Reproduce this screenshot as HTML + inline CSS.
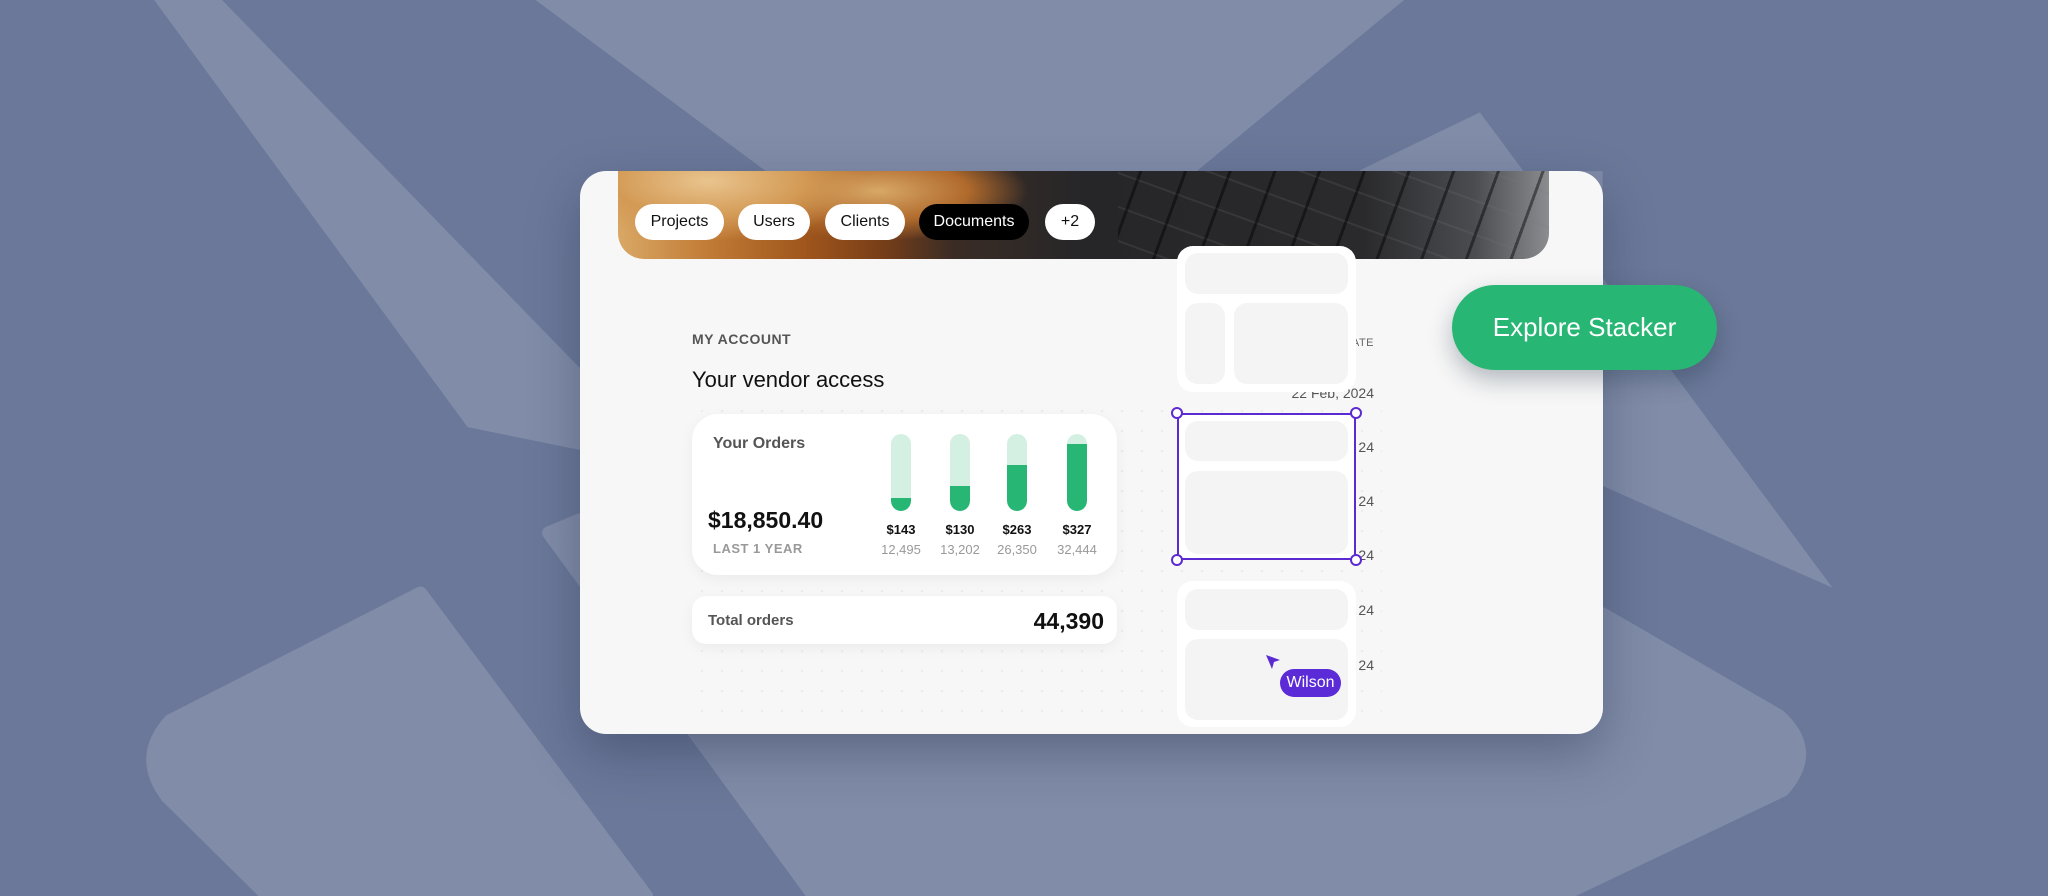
<!DOCTYPE html>
<html><head><meta charset="utf-8"><style>
*{margin:0;padding:0;box-sizing:border-box}
body{width:2048px;height:896px;overflow:hidden;background:#6b7899;font-family:"Liberation Sans",sans-serif;position:relative}
.a{position:absolute}
.card{left:580px;top:171px;width:1023px;height:563px;background:#f7f7f7;border-radius:26px;box-shadow:0 20px 50px rgba(30,40,70,.35);overflow:hidden}
.banner{left:38px;top:0;width:931px;height:88px;border-radius:0 0 26px 26px;overflow:hidden;
background:linear-gradient(90deg,#d9a865 0%,#c07a35 10%,#a0561c 20%,#7a3f18 28%,#3a2c25 36%,#262628 50%,#2a2a2c 80%,#4a4c50 92%,#8a8c90 100%)}
.bread{left:0;top:0;width:500px;height:88px;background:radial-gradient(ellipse 160px 60px at 90px 10px,#e9c48e 0,#d39a55 60%,rgba(211,154,85,0) 100%),radial-gradient(ellipse 150px 50px at 260px 20px,#d8a868 0,#b06a2c 60%,rgba(176,106,44,0) 100%)}
.keys{left:500px;top:0;width:431px;height:88px;background:repeating-linear-gradient(110deg,transparent 0 20px,rgba(0,0,0,.45) 20px 23px,transparent 23px 42px),repeating-linear-gradient(20deg,transparent 0 16px,rgba(120,120,125,.18) 16px 18px,transparent 18px 32px)}
.pill{top:33px;height:36px;border-radius:18px;background:#fff;color:#111;font-size:16px;line-height:36px;text-align:center}
.dots{left:112px;top:230px;width:690px;height:320px;background-image:radial-gradient(circle,#ebebeb 1px,transparent 1.5px);background-size:20px 20px}
.w{background:#fff;border-radius:16px}
.in{background:#f4f4f4;border-radius:13px;position:absolute}
.bar{width:20px;height:77px;top:434px;border-radius:10px;background:#d3f0e2;overflow:hidden}
.bar i{position:absolute;left:0;right:0;bottom:0;background:#27b673;border-radius:0 0 10px 10px}
.lb{font-size:13px;font-weight:bold;color:#111;width:60px;text-align:center}
.ct{font-size:13px;color:#999;width:60px;text-align:center}
.dt{font-size:14px;color:#555;text-align:right;width:120px}
.h{width:12px;height:12px;border-radius:50%;background:#fff;border:2px solid #5b2bd1}
</style></head><body>
<svg class="a" style="left:0;top:0" width="2048" height="896" viewBox="0 0 1568 686" preserveAspectRatio="none">
<g fill="#808ca8">
<polygon points="118,0 170,0 520,360 358,327"/>
<polygon points="410,0 1075,0 760,260"/>
<polygon points="1040,131 1133,86 1403,450 1227,372 1227,131"/>
<path d="M322,454 L495,686 L205,686 L128,610 Q105,580 130,552 Z" stroke="#808ca8" stroke-width="10" stroke-linejoin="round"/>
<path d="M420,408 L444,398 L1227,470 L1362,548 Q1392,575 1365,605 L1195,686 L623,686 Z" stroke="#808ca8" stroke-width="10" stroke-linejoin="round"/>
</g></svg>

<div class="a card">
  <div class="a banner"><div class="a bread"></div><div class="a keys"></div></div>
  <div class="a pill" style="left:55px;width:89px">Projects</div>
  <div class="a pill" style="left:158px;width:72px">Users</div>
  <div class="a pill" style="left:245px;width:80px">Clients</div>
  <div class="a pill" style="left:339px;width:110px;background:#000;color:#fff">Documents</div>
  <div class="a pill" style="left:465px;width:50px">+2</div>
  <div class="a dots"></div>
</div>

<div class="a" style="left:692px;top:331px;font-size:14px;font-weight:bold;color:#555;letter-spacing:.5px">MY ACCOUNT</div>
<div class="a" style="left:692px;top:367px;font-size:22px;color:#111">Your vendor access</div>

<div class="a" style="left:692px;top:414px;width:425px;height:161px;background:#fff;border-radius:26px;box-shadow:0 4px 14px rgba(0,0,0,.05)"></div>
<div class="a" style="left:713px;top:435px;font-size:16px;font-weight:bold;color:#555">Your Orders</div>
<div class="a" style="left:708px;top:507px;font-size:23px;font-weight:bold;color:#111">$18,850.40</div>
<div class="a" style="left:713px;top:541px;font-size:13px;font-weight:bold;color:#999;letter-spacing:.5px">LAST 1 YEAR</div>
<div class="a bar" style="left:891px"><i style="height:13px"></i></div>
<div class="a bar" style="left:950px"><i style="height:25px"></i></div>
<div class="a bar" style="left:1007px"><i style="height:46px"></i></div>
<div class="a bar" style="left:1067px"><i style="height:67px"></i></div>
<div class="a lb" style="left:871px;top:522px">$143</div>
<div class="a lb" style="left:930px;top:522px">$130</div>
<div class="a lb" style="left:987px;top:522px">$263</div>
<div class="a lb" style="left:1047px;top:522px">$327</div>
<div class="a ct" style="left:871px;top:542px">12,495</div>
<div class="a ct" style="left:930px;top:542px">13,202</div>
<div class="a ct" style="left:987px;top:542px">26,350</div>
<div class="a ct" style="left:1047px;top:542px">32,444</div>

<div class="a" style="left:692px;top:596px;width:425px;height:48px;background:#fff;border-radius:14px;box-shadow:0 4px 14px rgba(0,0,0,.05)"></div>
<div class="a" style="left:708px;top:612px;font-size:15px;font-weight:bold;color:#555">Total orders</div>
<div class="a" style="left:1000px;top:608px;width:104px;text-align:right;font-size:23px;font-weight:bold;color:#111">44,390</div>

<div class="a" style="left:1320px;top:337px;font-size:11px;color:#666;letter-spacing:.5px;width:54px;text-align:right">ATE</div>
<div class="a dt" style="left:1254px;top:385px">22 Feb, 2024</div>
<div class="a dt" style="left:1254px;top:439px">24</div>
<div class="a dt" style="left:1254px;top:493px">24</div>
<div class="a dt" style="left:1254px;top:547px">24</div>
<div class="a dt" style="left:1254px;top:602px">24</div>
<div class="a dt" style="left:1254px;top:657px">24</div>

<div class="a w" style="left:1177px;top:246px;width:179px;height:146px">
  <div class="in" style="left:8px;top:7px;width:163px;height:41px"></div>
  <div class="in" style="left:8px;top:57px;width:40px;height:81px"></div>
  <div class="in" style="left:57px;top:57px;width:114px;height:81px"></div>
</div>
<div class="a w" style="left:1177px;top:413px;width:179px;height:147px;border-radius:0;border:2px solid #5b2bd1">
  <div class="in" style="left:6px;top:6px;width:163px;height:40px"></div>
  <div class="in" style="left:6px;top:56px;width:163px;height:83px"></div>
</div>
<div class="a h" style="left:1171px;top:407px"></div>
<div class="a h" style="left:1350px;top:407px"></div>
<div class="a h" style="left:1171px;top:554px"></div>
<div class="a h" style="left:1350px;top:554px"></div>
<div class="a w" style="left:1177px;top:581px;width:179px;height:146px">
  <div class="in" style="left:8px;top:8px;width:163px;height:41px"></div>
  <div class="in" style="left:8px;top:58px;width:163px;height:81px"></div>
</div>
<svg class="a" style="left:1264px;top:653px" width="20" height="20" viewBox="0 0 20 20"><path d="M2,2 L16,7 L10,9 L8,16 Z" fill="#5b2bd1"/></svg>
<div class="a" style="left:1280px;top:669px;width:61px;height:28px;border-radius:14px;background:#5a2bd6;color:#fff;font-size:16px;line-height:28px;text-align:center">Wilson</div>

<div class="a" style="left:1452px;top:285px;width:265px;height:85px;border-radius:43px;background:#27b673;color:#fff;font-size:26px;line-height:85px;text-align:center;box-shadow:0 10px 24px rgba(20,40,60,.3)">Explore Stacker</div>
</body></html>
